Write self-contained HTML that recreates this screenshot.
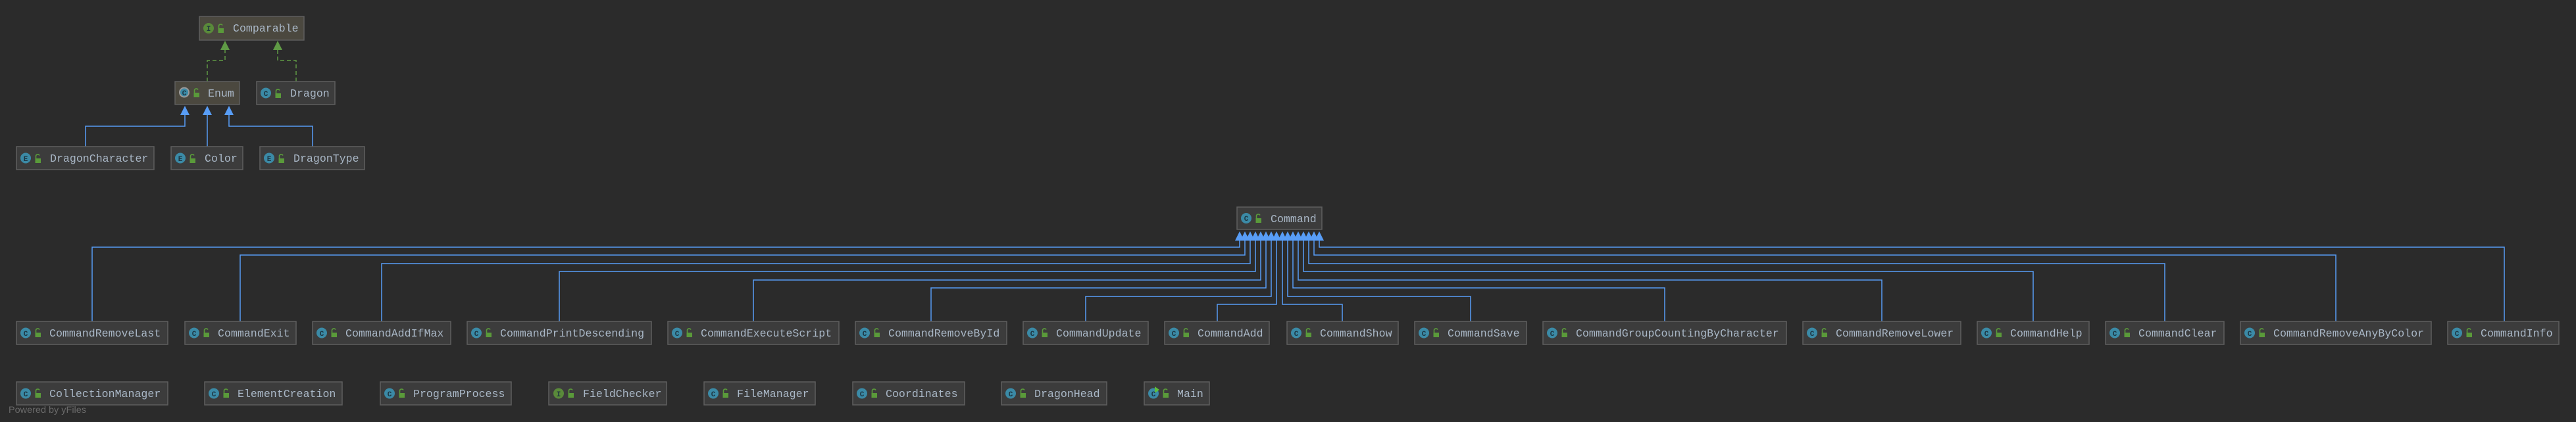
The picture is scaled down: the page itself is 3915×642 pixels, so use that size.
<!DOCTYPE html>
<html><head><meta charset="utf-8"><style>
html,body{margin:0;padding:0;background:#2b2b2b;}
svg{display:block;}
text.t{font-family:"Liberation Mono",monospace;font-size:16.6px;fill:#a9b7c6;}
text.l{font-family:"Liberation Mono",monospace;font-size:11px;font-weight:bold;fill:#1d3440;}
</style></head><body>
<svg width="3915" height="642" viewBox="0 0 3915 642" xmlns="http://www.w3.org/2000/svg">
<defs>
<g id="lk"><path d="M2.5 -2 V-6 A3 3 0 0 1 8 -6.5" stroke="#5a9a3a" stroke-width="1.6" fill="none"/><rect x="1.5" y="-2" width="8.5" height="7" fill="#5a9a3a"/></g>
</defs>
<rect width="3915" height="642" fill="#2b2b2b"/>

<g stroke="#5f9a45" stroke-width="1.5" fill="none" stroke-dasharray="6,4">
<polyline points="315,124 315,92 342,92 342,76"/>
<polyline points="450,124 450,92 422,92 422,76"/>
</g>
<g fill="#5f9a45">
<polygon points="342,62 335,76 349,76"/>
<polygon points="422,62 415,76 429,76"/>
</g>
<g stroke="#589df6" stroke-width="1.5" fill="none">
<polyline points="130,223 130,192 281,192 281,175"/>
<line x1="315" y1="223" x2="315" y2="175"/>
<polyline points="475,223 475,192 348,192 348,175"/>
</g>
<g fill="#589df6">
<polygon points="281,161 274,175 288,175"/>
<polygon points="315,161 308,175 322,175"/>
<polygon points="348,161 341,175 355,175"/>
</g>

<g stroke="#589df6" stroke-width="1.5" fill="none">
<polyline points="140,489 140,376 1884,376 1884,366"/>
<polyline points="365,489 365,388 1892,388 1892,366"/>
<polyline points="580,489 580,401 1900,401 1900,366"/>
<polyline points="850,489 850,413 1908,413 1908,366"/>
<polyline points="1145,489 1145,426 1916,426 1916,366"/>
<polyline points="1415,489 1415,438 1924,438 1924,366"/>
<polyline points="1650,489 1650,451 1932,451 1932,366"/>
<polyline points="1850,489 1850,463 1940,463 1940,366"/>
<polyline points="2040,489 2040,463 1949,463 1949,366"/>
<polyline points="2235,489 2235,451 1957,451 1957,366"/>
<polyline points="2530,489 2530,438 1965,438 1965,366"/>
<polyline points="2860,489 2860,426 1973,426 1973,366"/>
<polyline points="3090,489 3090,413 1981,413 1981,366"/>
<polyline points="3290,489 3290,401 1989,401 1989,366"/>
<polyline points="3550,489 3550,388 1997,388 1997,366"/>
<polyline points="3806,489 3806,376 2005,376 2005,366"/>
</g>
<g fill="#589df6">
<polygon points="1884,352 1877,366 1891,366"/><polygon points="1892,352 1885,366 1899,366"/>
<polygon points="1900,352 1893,366 1907,366"/><polygon points="1908,352 1901,366 1915,366"/>
<polygon points="1916,352 1909,366 1923,366"/><polygon points="1924,352 1917,366 1931,366"/>
<polygon points="1932,352 1925,366 1939,366"/><polygon points="1940,352 1933,366 1947,366"/>
<polygon points="1949,352 1942,366 1956,366"/><polygon points="1957,352 1950,366 1964,366"/>
<polygon points="1965,352 1958,366 1972,366"/><polygon points="1973,352 1966,366 1980,366"/>
<polygon points="1981,352 1974,366 1988,366"/><polygon points="1989,352 1982,366 1996,366"/>
<polygon points="1997,352 1990,366 2004,366"/><polygon points="2005,352 1998,366 2012,366"/>
</g>

<g stroke="#5e5e5e" stroke-width="1.5">
<rect x="303" y="25" width="159" height="36" fill="#4b483f"/>
<rect x="266" y="124" width="98" height="35" fill="#4b483f"/>
<rect x="390" y="124" width="119" height="35" fill="#3c3c3c"/>
<rect x="25" y="223" width="209" height="35" fill="#3c3c3c"/>
<rect x="260" y="223" width="109" height="35" fill="#3c3c3c"/>
<rect x="395" y="223" width="159" height="35" fill="#3c3c3c"/>
<rect x="1880" y="315" width="129" height="34" fill="#3c3c3c"/>
<rect x="25" y="489" width="230" height="35" fill="#3c3c3c"/>
<rect x="281" y="489" width="169" height="35" fill="#3c3c3c"/>
<rect x="475" y="489" width="210" height="35" fill="#3c3c3c"/>
<rect x="710" y="489" width="280" height="35" fill="#3c3c3c"/>
<rect x="1015" y="489" width="260" height="35" fill="#3c3c3c"/>
<rect x="1300" y="489" width="230" height="35" fill="#3c3c3c"/>
<rect x="1555" y="489" width="190" height="35" fill="#3c3c3c"/>
<rect x="1770" y="489" width="159" height="35" fill="#3c3c3c"/>
<rect x="1956" y="489" width="169" height="35" fill="#3c3c3c"/>
<rect x="2150" y="489" width="170" height="35" fill="#3c3c3c"/>
<rect x="2345" y="489" width="370" height="35" fill="#3c3c3c"/>
<rect x="2740" y="489" width="240" height="35" fill="#3c3c3c"/>
<rect x="3005" y="489" width="170" height="35" fill="#3c3c3c"/>
<rect x="3200" y="489" width="180" height="35" fill="#3c3c3c"/>
<rect x="3405" y="489" width="290" height="35" fill="#3c3c3c"/>
<rect x="3720" y="489" width="169" height="35" fill="#3c3c3c"/>
<rect x="25" y="581" width="230" height="35" fill="#3c3c3c"/>
<rect x="311" y="581" width="209" height="35" fill="#3c3c3c"/>
<rect x="578" y="581" width="199" height="35" fill="#3c3c3c"/>
<rect x="834" y="581" width="179" height="35" fill="#3c3c3c"/>
<rect x="1070" y="581" width="169" height="35" fill="#3c3c3c"/>
<rect x="1296" y="581" width="170" height="35" fill="#3c3c3c"/>
<rect x="1522" y="581" width="160" height="35" fill="#3c3c3c"/>
<rect x="1739" y="581" width="99" height="35" fill="#3c3c3c"/>
</g>

<g fill="#3b8aa6">
<circle cx="280" cy="140.5" r="8" fill="#9a9a9a"/><circle cx="280" cy="140.5" r="6" fill="#3b8aa6"/>
<circle cx="404" cy="141.5" r="8"/>
<circle cx="39" cy="240.5" r="8"/><circle cx="274" cy="240.5" r="8"/><circle cx="409" cy="240.5" r="8"/>
<circle cx="1894" cy="332" r="8"/>
<circle cx="39" cy="506.5" r="8"/><circle cx="295" cy="506.5" r="8"/><circle cx="489" cy="506.5" r="8"/>
<circle cx="724" cy="506.5" r="8"/><circle cx="1029" cy="506.5" r="8"/><circle cx="1314" cy="506.5" r="8"/>
<circle cx="1569" cy="506.5" r="8"/><circle cx="1784" cy="506.5" r="8"/><circle cx="1970" cy="506.5" r="8"/>
<circle cx="2164" cy="506.5" r="8"/><circle cx="2359" cy="506.5" r="8"/><circle cx="2754" cy="506.5" r="8"/>
<circle cx="3019" cy="506.5" r="8"/><circle cx="3214" cy="506.5" r="8"/><circle cx="3419" cy="506.5" r="8"/>
<circle cx="3734" cy="506.5" r="8"/>
<circle cx="39" cy="598.5" r="8"/><circle cx="325" cy="598.5" r="8"/><circle cx="592" cy="598.5" r="8"/>
<circle cx="849" cy="598.5" r="8" fill="#5a8a3a"/><circle cx="1084" cy="598.5" r="8"/><circle cx="1310" cy="598.5" r="8"/>
<circle cx="1536" cy="598.5" r="8"/><circle cx="1753" cy="598.5" r="8"/>
<circle cx="317" cy="43" r="8" fill="#5a8a3a"/>
</g>
<polygon points="1755,588 1762,593 1755,598" fill="#5fbf3a"/>
<g>
<text class="l" x="317" y="47" text-anchor="middle">I</text>
<text class="l" x="280" y="145" text-anchor="middle">C</text>
<text class="l" x="404" y="146" text-anchor="middle">C</text>
<text class="l" x="39" y="245" text-anchor="middle">E</text><text class="l" x="274" y="245" text-anchor="middle">E</text><text class="l" x="409" y="245" text-anchor="middle">E</text>
<text class="l" x="1894" y="336" text-anchor="middle">C</text>
<text class="l" x="39" y="511" text-anchor="middle">C</text><text class="l" x="295" y="511" text-anchor="middle">C</text><text class="l" x="489" y="511" text-anchor="middle">C</text>
<text class="l" x="724" y="511" text-anchor="middle">C</text><text class="l" x="1029" y="511" text-anchor="middle">C</text><text class="l" x="1314" y="511" text-anchor="middle">C</text>
<text class="l" x="1569" y="511" text-anchor="middle">C</text><text class="l" x="1784" y="511" text-anchor="middle">C</text><text class="l" x="1970" y="511" text-anchor="middle">C</text>
<text class="l" x="2164" y="511" text-anchor="middle">C</text><text class="l" x="2359" y="511" text-anchor="middle">C</text><text class="l" x="2754" y="511" text-anchor="middle">C</text>
<text class="l" x="3019" y="511" text-anchor="middle">C</text><text class="l" x="3214" y="511" text-anchor="middle">C</text><text class="l" x="3419" y="511" text-anchor="middle">C</text>
<text class="l" x="3734" y="511" text-anchor="middle">C</text>
<text class="l" x="39" y="603" text-anchor="middle">C</text><text class="l" x="325" y="603" text-anchor="middle">C</text><text class="l" x="592" y="603" text-anchor="middle">C</text>
<text class="l" x="849" y="603" text-anchor="middle">I</text><text class="l" x="1084" y="603" text-anchor="middle">C</text><text class="l" x="1310" y="603" text-anchor="middle">C</text>
<text class="l" x="1536" y="603" text-anchor="middle">C</text><text class="l" x="1753" y="603" text-anchor="middle">C</text>
</g>

<use href="#lk" x="330" y="45"/><use href="#lk" x="293" y="143"/><use href="#lk" x="417" y="144"/>
<use href="#lk" x="52" y="243"/><use href="#lk" x="287" y="243"/><use href="#lk" x="422" y="243"/>
<use href="#lk" x="1907" y="334"/>
<use href="#lk" x="52" y="508"/><use href="#lk" x="308" y="508"/><use href="#lk" x="502" y="508"/>
<use href="#lk" x="737" y="508"/><use href="#lk" x="1042" y="508"/><use href="#lk" x="1327" y="508"/>
<use href="#lk" x="1582" y="508"/><use href="#lk" x="1797" y="508"/><use href="#lk" x="1983" y="508"/>
<use href="#lk" x="2177" y="508"/><use href="#lk" x="2372" y="508"/><use href="#lk" x="2767" y="508"/>
<use href="#lk" x="3032" y="508"/><use href="#lk" x="3227" y="508"/><use href="#lk" x="3432" y="508"/>
<use href="#lk" x="3747" y="508"/>
<use href="#lk" x="52" y="600"/><use href="#lk" x="338" y="600"/><use href="#lk" x="605" y="600"/>
<use href="#lk" x="862" y="600"/><use href="#lk" x="1097" y="600"/><use href="#lk" x="1323" y="600"/>
<use href="#lk" x="1549" y="600"/><use href="#lk" x="1766" y="600"/>

<text class="t" x="354" y="48">Comparable</text>
<text class="t" x="316" y="147">Enum</text>
<text class="t" x="441" y="147">Dragon</text>
<text class="t" x="76" y="246">DragonCharacter</text>
<text class="t" x="311" y="246">Color</text>
<text class="t" x="446" y="246">DragonType</text>
<text class="t" x="1931" y="338">Command</text>
<text class="t" x="75" y="512">CommandRemoveLast</text>
<text class="t" x="331" y="512">CommandExit</text>
<text class="t" x="525" y="512">CommandAddIfMax</text>
<text class="t" x="760" y="512">CommandPrintDescending</text>
<text class="t" x="1065" y="512">CommandExecuteScript</text>
<text class="t" x="1350" y="512">CommandRemoveById</text>
<text class="t" x="1605" y="512">CommandUpdate</text>
<text class="t" x="1820" y="512">CommandAdd</text>
<text class="t" x="2006" y="512">CommandShow</text>
<text class="t" x="2200" y="512">CommandSave</text>
<text class="t" x="2395" y="512">CommandGroupCountingByCharacter</text>
<text class="t" x="2790" y="512">CommandRemoveLower</text>
<text class="t" x="3055" y="512">CommandHelp</text>
<text class="t" x="3250" y="512">CommandClear</text>
<text class="t" x="3455" y="512">CommandRemoveAnyByColor</text>
<text class="t" x="3770" y="512">CommandInfo</text>
<text class="t" x="75" y="604">CollectionManager</text>
<text class="t" x="361" y="604">ElementCreation</text>
<text class="t" x="628" y="604">ProgramProcess</text>
<text class="t" x="886" y="604">FieldChecker</text>
<text class="t" x="1120" y="604">FileManager</text>
<text class="t" x="1346" y="604">Coordinates</text>
<text class="t" x="1572" y="604">DragonHead</text>
<text class="t" x="1789" y="604">Main</text>

<text x="13" y="628" font-family="Liberation Sans, sans-serif" font-size="14" fill="#6a6a6a" textLength="118" lengthAdjust="spacingAndGlyphs">Powered by yFiles</text>
</svg>
</body></html>
